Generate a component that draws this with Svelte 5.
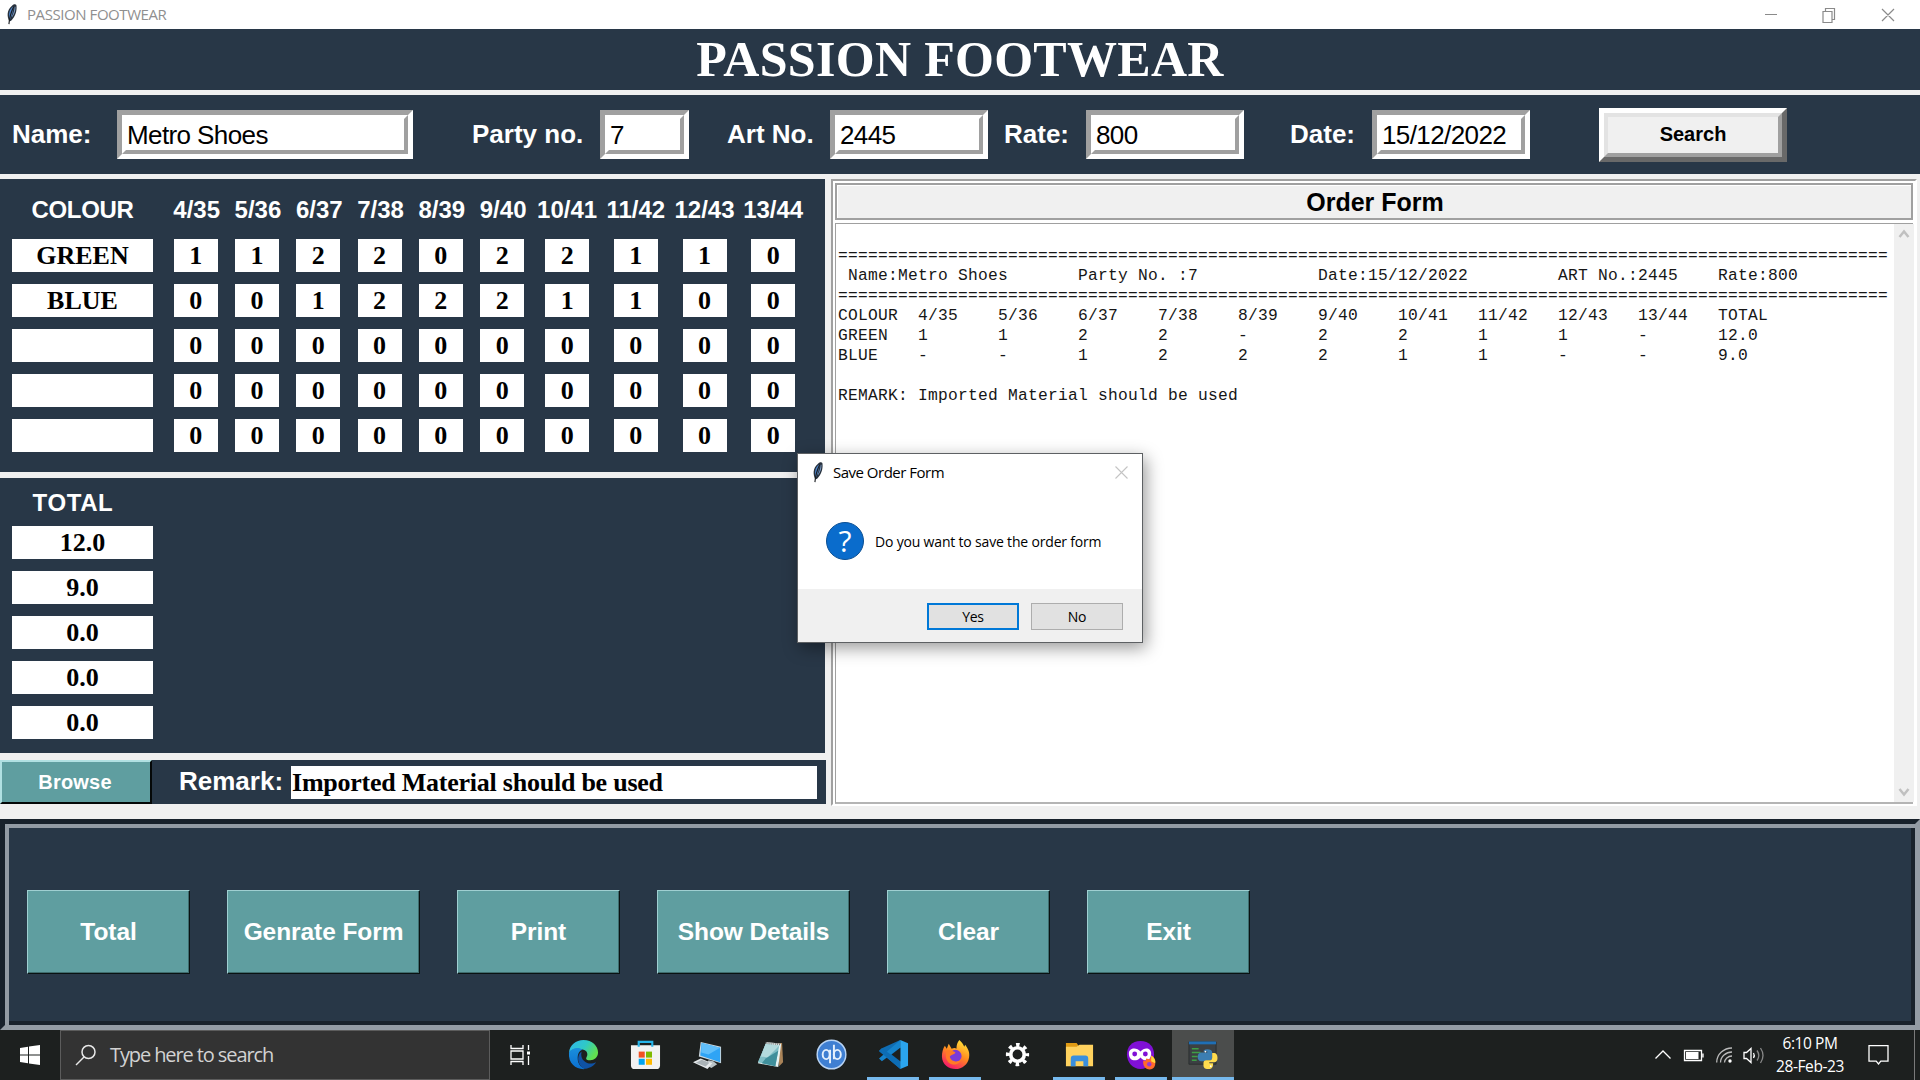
<script>
  const sizes = ['4/35', '5/36', '6/37', '7/38', '8/39', '9/40', '10/41', '11/42', '12/43', '13/44'];
  const rows = [
    { colour: 'GREEN', qty: [1, 1, 2, 2, 0, 2, 2, 1, 1, 0] },
    { colour: 'BLUE', qty: [0, 0, 1, 2, 2, 2, 1, 1, 0, 0] },
    { colour: '', qty: Array(10).fill(0) },
    { colour: '', qty: Array(10).fill(0) },
    { colour: '', qty: Array(10).fill(0) }
  ];
  const totals = ['12.0', '9.0', '0.0', '0.0', '0.0'];
  const fields = [
    { id: 'name', label: 'Name:', value: 'Metro Shoes' },
    { id: 'party', label: 'Party no.', value: '7' },
    { id: 'art', label: 'Art No.', value: '2445' },
    { id: 'rate', label: 'Rate:', value: '800' },
    { id: 'date', label: 'Date:', value: '15/12/2022' }
  ];
  const actions = ['Total', 'Genrate Form', 'Print', 'Show Details', 'Clear', 'Exit'];

  // Report text is laid out on 8-character tab stops.
  const tab = (cells) => cells.map((c) => String(c).padEnd(8)).join('').trimEnd();
  const rule = '='.repeat(105);
  const report = [
    '',
    rule,
    ' Name:Metro Shoes'.padEnd(24) + 'Party No. :7'.padEnd(24) + 'Date:15/12/2022'.padEnd(24) + 'ART No.:2445'.padEnd(16) + 'Rate:800',
    rule,
    tab(['COLOUR', ...sizes, 'TOTAL']),
    ...rows.slice(0, 2).map((r, i) => tab([r.colour, ...r.qty.map((q) => q || '-'), totals[i]])),
    '',
    tab(['REMARK:']) + ' Imported Material should be used'
  ];
</script>

{#snippet feather()}
  <svg class="feather" viewBox="0 0 14 24">
    <path d="M4 20C1 14 1 7 7 2c2-2 4-2 5-1 1 6-1 13-6 18z" fill="#26303c" />
    <path d="M4 16C3 11 4 6 8 3l1 0C8 8 7 13 5 17z" fill="#4e86cd" />
    <path d="M7 14c2-4 3-8 3-11l1 0c0 5-1 8-4 12z" fill="#7d9cc4" />
    <path d="M9 3C6 9 4 16 3.5 23" fill="none" stroke="#1b1e22" stroke-width="1.3" />
  </svg>
{/snippet}

<div class="screen">
  <header class="titlebar">
    {@render feather()}
    <span class="wintitle">PASSION FOOTWEAR</span>
    <svg class="winctl" viewBox="0 0 142 16" fill="none" stroke="#8a8a8a" stroke-width="1.2">
      <path d="M5 7.5h12M63 4.500h9v11h-9zM65.500 4.500v-3h9v11h-2.500M122 2l12 12M134 2l-12 12" />
    </svg>
  </header>

  <h1>PASSION FOOTWEAR</h1>

  <section class="fields">
    {#each fields as f}
      <label class="lab {f.id}" for={f.id}>{f.label}</label>
      <div class="entry {f.id}-entry" id={f.id}><span>{f.value}</span></div>
    {/each}
    <button class="search"><span>Search</span></button>
  </section>

  <main>
    <div class="left">
      <section class="colours">
        <div class="line head">
          <b class="first">COLOUR</b>
          {#each sizes as s, i}<b class:narrow={i < 6}>{s}</b>{/each}
        </div>
        {#each rows as r}
          <div class="line">
            <div class="first"><span class="cell">{r.colour}</span></div>
            {#each r.qty as q}<div><span class="cell">{q}</span></div>{/each}
          </div>
        {/each}
      </section>
      <section class="totals">
        <b>TOTAL</b>
        {#each totals as t}<span class="cell">{t}</span>{/each}
      </section>
      <section class="remark">
        <button class="browse">Browse</button>
        <b>Remark:</b>
        <span class="cell">Imported Material should be used</span>
      </section>
    </div>
    <section class="order">
      <h2>Order Form</h2>
      <div class="textarea">
        <div class="report">
          {#each report as l}<div class="rl">{l}</div>{/each}
        </div>
        <div class="scroll">
          <svg viewBox="0 0 12 10"><path d="M1.500 8L6 2.500 10.500 8" /></svg>
          <svg viewBox="0 0 12 10"><path d="M1.500 2L6 7.500 10.500 2" /></svg>
        </div>
      </div>
    </section>
  </main>

  <section class="actions">
    {#each actions as a}<button class:big={a.length > 8}>{a}</button>{/each}
  </section>

  <footer class="taskbar">
    <div class="start">
      <svg width="20" height="20" viewBox="0 0 20 20" fill="#fff"><path d="M0 3l8-1.200v7.700H0zM9 1.600L20 0v9.500H9zM0 10.500h8v7.700L0 17zM9 10.500h11V20L9 18.400z" /></svg>
    </div>
    <div class="find">
      <svg width="22" height="22" viewBox="0 0 22 22" fill="none" stroke="#e8e8e8" stroke-width="1.500"><circle cx="13.500" cy="8" r="6.500" /><path d="M9 13L1 21" /></svg>
      <span>Type here to search</span>
    </div>
    <div class="view">
      <svg width="21" height="20" viewBox="0 0 21 20" fill="none" stroke="#fff" stroke-width="1.300"><path d="M1 0v3.500h12V0M1 20v-3.500h12V20M1 6h12v8H1zM18.500 0v5M18.500 11v9" /><path d="M17 6.500h3v3h-3z" fill="#fff" stroke="none" /></svg>
    </div>
    <div class="task">
      <svg viewBox="0 0 32 32">
        <defs>
          <linearGradient id="eg" x1="0" y1="0" x2="1" y2=".5"><stop offset="0" stop-color="#2fb4ee" /><stop offset=".55" stop-color="#2fc9c7" /><stop offset="1" stop-color="#62e04f" /></linearGradient>
          <linearGradient id="eb" x1="0" y1="0" x2="0" y2="1"><stop offset="0" stop-color="#1a8fdd" /><stop offset="1" stop-color="#0b6fcf" /></linearGradient>
        </defs>
        <path d="M1 14C2 6 8 1 16 1c9 0 15 6 15 13 0 5-4 8-8 8-3 0-5-1-4-3 2-3 1-7-3-8C10 9 4 10 1 14z" fill="url(#eg)" />
        <path d="M1 14c3-5 10-6 14-3-4 1-5 5-5 9 0 5 3 9 8 11C9 32 0 26 1 14z" fill="url(#eb)" />
        <path d="M14 13c-3 2-5 8-2 13 2 4 6 6 9 4 4-1 7-4 8-6-4 2-9 2-12-1-3-2-4-6-3-10z" fill="#0f52a5" />
      </svg>
    </div>
    <div class="task">
      <svg viewBox="0 0 32 32"><path d="M1 6.500h30V27a4 4 0 0 1-4 4H5a4 4 0 0 1-4-4z" fill="#f2f2f2" /><path d="M9 8V3h14v5" fill="none" stroke="#27b5ea" stroke-width="2.200" /><path d="M9 13h6.200v6.200H9z" fill="#f25022" /><path d="M16.500 13h6.200v6.200h-6.200z" fill="#7fba00" /><path d="M9 20.400h6.200v6.200H9z" fill="#00a4ef" /><path d="M16.500 20.400h6.200v6.200h-6.200z" fill="#ffb900" /></svg>
    </div>
    <div class="task">
      <svg viewBox="0 0 32 32"><path d="M9 3l21 5v17L7 18z" fill="#c9d6dd" /><path d="M10 4l19 5v15L8.500 17z" fill="#2fa4f5" /><path d="M10 4l19 5-12 7-7.500-2z" fill="#61bffa" /><path d="M17 22l5 1 4 3-6 4-5-3z" fill="#b9c2c6" /><path d="M1 24l8-4 12 5-5 6z" fill="#e4e8ea" /><path d="M4 24.500l6-3 8 3-4 4z" fill="#aab3b7" /></svg>
    </div>
    <div class="task">
      <svg viewBox="0 0 32 32"><path d="M25 4h4l1 20-4 4z" fill="#a98358" /><path d="M13 3l15 2-3 24-21-4z" fill="#e7f3f2" /><path d="M12 5l14 2-4 21-18-4z" fill="#7fbec6" /><path d="M12 5l14 2-12 12-7-1z" fill="#b3dadd" /><path d="M12 20l13-8-3 16-14-3z" fill="#3f8f9b" /><path d="M12 4l15 1.500" stroke="#777" stroke-width="2" stroke-dasharray="1 1" /></svg>
    </div>
    <div class="task">
      <svg viewBox="0 0 32 32"><circle cx="16" cy="16" r="14.800" fill="#3f7fd2" stroke="#b9d4f4" stroke-width="1.500" /><g fill="none" stroke="#e5f0fc" stroke-width="2"><ellipse cx="10.500" cy="16" rx="3.600" ry="4.800" /><path d="M14.500 11v14M18.500 6v15" /><ellipse cx="22" cy="16" rx="3.600" ry="4.800" /></g></svg>
    </div>
    <div class="task run">
      <svg viewBox="0 0 32 32"><path d="M23 1v30L1 12.500 4 9.500z" fill="#0f6db3" /><path d="M23 1L1 20l3 3L23 9z" fill="#1583cc" /><path d="M23 31L1 12.500 4 9.500 23 23z" fill="#0d6db5" /><path d="M23 1l8 3.500v23L23 31z" fill="#2ba5ee" /><path d="M23 9v14l-9-7z" fill="#1d201f" /></svg>
    </div>
    <div class="task run">
      <svg viewBox="0 0 32 32">
        <defs><linearGradient id="ff" x1=".8" y1="0" x2=".3" y2="1"><stop offset="0" stop-color="#ffe83b" /><stop offset=".5" stop-color="#ff8a1f" /><stop offset="1" stop-color="#f5156c" /></linearGradient></defs>
        <path d="M20 1c2 2 4 4 5 7l1-2c3 4 5 8 4 13-1 7-7 12-14 12S2 26 2 18c0-4 1-8 3-11l2 3 2-5 3 5c2-1 4-1 5 0 0-4 1-7 3-9z" fill="url(#ff)" />
        <circle cx="16" cy="17.500" r="6.300" fill="#7a3bd8" /><path d="M7 12c3-1 6 0 9 2-1 2-4 2-6 4 1 5 8 7 12 3-1 5-8 7-12 4-4-3-5-8-3-13z" fill="#ff7a26" />
      </svg>
    </div>
    <div class="task">
      <svg viewBox="0 0 32 32" fill="none" stroke="#fff"><circle cx="16" cy="16" r="7" stroke-width="3.800" /><circle cx="16" cy="16" r="10" stroke-width="4" stroke-dasharray="3.600 4.254" stroke-dashoffset="1.800" /></svg>
    </div>
    <div class="task run">
      <svg viewBox="0 0 32 32"><path d="M2 4h11l2 3v6H2z" fill="#e09b14" /><path d="M2 8l11 0 3-2h14v22H2z" fill="#ffd25e" /><path d="M7 28V20q0-3 3-3h12q3 0 3 3v8h-5v-5h-8v5z" fill="#3a8fdd" /></svg>
    </div>
    <div class="task run">
      <svg viewBox="0 0 32 32"><path d="M16 2c9 0 14 6 14 14s-6 15-14 15S2 24 2 16 7 2 16 2z" fill="#8010d6" /><path d="M4 15c0-6 8-7 12-2 4-5 11-4 11 2 0 8-7 9-11 4-4 5-12 4-12-4z" fill="#fff" /><circle cx="10" cy="15.500" r="2.500" fill="#8010d6" /><circle cx="21" cy="15.500" r="2.500" fill="#8010d6" /><path d="M27 17c4 2 5 6 4 10s-5 5-8 4-5-5-4-9l2 1 1-3 3 1c1-1 2-2 2-4z" fill="#ff6a2b" /><path d="M27 17c3 2 5 5 4 8l-4-2z" fill="#ffd83a" /><circle cx="25" cy="26" r="2.300" fill="#9a3bd0" /></svg>
    </div>
    <div class="task run active">
      <svg viewBox="0 0 32 32"><path d="M2 3h28v23H2z" fill="#3c4043" stroke="#2b2e30" /><path d="M2 2.500h28v3H2z" fill="#1f6fb5" /><path d="M5 10h7M5 14h9M5 18h6M5 22h5" stroke="#3e9e46" stroke-width="1.500" /><path d="M18 21h-3.500c-2 0-3.500-2-3.500-4.500 0-3 2-4.500 4-4.500h6v-1h-4c0-1.500 1-2.500 4-2.500s5 1 5 3.500v5c0 2-1 3-3 3h-2c-2 0-3 1-3 3z" transform="translate(0 2)" fill="#3c7eb2" /><path d="M26 14.500h2c2 0 3.500 2 3.500 5s-1.500 4.500-3.500 4.500h-5v1h4c0 4-1 6-5 6s-5-2-5-4v-2c0-2 1-3 3-3h3c2 0 3-1 3-3z" fill="#ffdc4e" /><circle cx="19" cy="13" r=".9" fill="#fff" /><circle cx="24.500" cy="28" r=".9" fill="#fff" /></svg>
    </div>
    <div class="tray">
      <svg width="110" height="22" viewBox="0 0 110 22" fill="none" stroke="#fff" stroke-width="1.300">
        <path d="M1.500 14.500L9 7l7.500 7.500" />
        <path d="M30.500 6.500h17v10h-17zM49 9.500v4" /><path d="M32 8h12.500v7H32z" fill="#fff" stroke="none" />
        <path d="M62.700 18.500C62.700 10 70 4 78 4M66.500 18.500C66.500 12.500 72 8 78 8M70.500 18.500C70.500 15 74 12 78 12" stroke="#bbb" /><circle cx="76" cy="17" r="1.700" fill="#fff" stroke="none" />
        <path d="M90 8.500h2.500l4.500-4v14l-4.500-4H90z" /><path d="M99.500 9q1.600 2.500 0 5" /><path d="M103 6.500q3.600 5 0 10M106.500 4q5 7.500 0 15" stroke="#888" />
      </svg>
    </div>
    <div class="clock"><span>6:10 PM</span><span>28-Feb-23</span></div>
    <svg class="notif" width="21" height="20" viewBox="0 0 21 20" fill="none" stroke="#fff" stroke-width="1.300"><path d="M1 .7h19v15.500h-7.200L10.500 19l-2.300-2.800H1z" /></svg>
    <i class="peek"></i>
  </footer>

  <div class="dialog">
    <div class="dtitle">
      {@render feather()}
      <span>Save Order Form</span>
      <svg width="13" height="13" viewBox="0 0 13 13" stroke="#c4c4c4" stroke-width="1.100"><path d="M.5.5l12 12M12.500.5l-12 12" /></svg>
    </div>
    <div class="dbody">
      <div class="q">?</div>
      <span>Do you want to save the order form</span>
    </div>
    <div class="dfoot">
      <button class="yes">Yes</button>
      <button>No</button>
    </div>
  </div>
</div>

<style>
  :global(body) { margin: 0; overflow: hidden; }
  .screen { position: relative; width: 1920px; height: 1080px; display: flex; flex-direction: column; background: #f0f0f0; font-family: 'Liberation Sans', Arial, sans-serif; overflow: hidden; }
  .screen * { box-sizing: border-box; }
  button { font: inherit; margin: 0; padding: 0; border-radius: 0; }

  .titlebar { height: 29px; flex: none; background: #fff; display: flex; align-items: center; padding-left: 5px; }
  .feather { width: 14px; height: 21px; flex: none; }
  .wintitle { font: 15px/29px 'Open Sans', sans-serif; color: #8f8f8f; margin-left: 8px; flex: 1; letter-spacing: -0.430px; }
  .winctl { width: 142px; height: 16px; margin-right: 18px; }

  h1 { margin: 0 0 5px; height: 61px; flex: none; background: #283747; color: #fff; text-align: center; font: bold 50px/60px 'Liberation Serif', serif; letter-spacing: .3px; }

  .fields { height: 79px; flex: none; margin-bottom: 5px; background: #283747; display: grid; align-items: center; justify-items: start; grid-template-columns: 105px 355px 128px 127px 103px 174px 82px 204px 82px 227px 188px; padding-left: 12px; }
  .lab { color: #fff; font-weight: bold; font-size: 26px; white-space: nowrap; }
  .entry { height: 49px; width: 158px; border: 5px solid; border-color: #a0a0a0 #fff #fff #a0a0a0; }
  .entry span { display: block; height: 39px; background: #fff; border: 4px solid; border-color: #fff #a0a0a0 #a0a0a0 #fff; padding-left: 1px; font-size: 26px; line-height: 33px; color: #000; letter-spacing: -0.6px; }
  .name-entry { width: 296px; }
  .party-entry { width: 89px; }
  .search { width: 188px; height: 54px; border: 5px solid; border-color: #fff #696969 #696969 #fff; background: #f0f0f0; font-weight: bold; font-size: 20px; color: #000; }
  .search span { display: block; height: 44px; border: 4px solid; border-color: #e3e3e3 #a0a0a0 #a0a0a0 #e3e3e3; line-height: 35px; }

  main { height: 640px; flex: none; display: flex; gap: 5px; }
  .left { width: 826px; display: flex; flex-direction: column; }
  .cell { display: block; height: 33px; background: #fff; color: #000; text-align: center; font: bold 26px/33px 'Liberation Serif', serif; width: 44px; margin: 0 auto; }
  .colours { width: 825px; height: 293px; background: #283747; display: flex; flex-direction: column; gap: 12px; padding-top: 14px; }
  .line { display: grid; grid-template-columns: 165px repeat(6, 61.3px) repeat(4, 68.7px); }
  .head { height: 34px; align-items: center; color: #fff; font-size: 24px; text-align: center; }
  .head .first { letter-spacing: -.3px; }
  .head .narrow { padding-left: 2px; }
  .line .first .cell { width: 141px; }
  .totals { width: 825px; height: 275px; margin-top: 6px; background: #283747; display: flex; flex-direction: column; gap: 12px; padding: 8px 12px 0; }
  .totals b { color: #fff; font-size: 24px; line-height: 33px; height: 28px; width: 122px; text-align: center; letter-spacing: .6px; }
  .totals .cell { width: 141px; margin: 0; flex: none; }
  .remark { width: 826px; height: 44px; margin-top: 7px; background: #283747; display: flex; align-items: center; }
  .browse { width: 152px; height: 44px; background: #5f9ea0; color: #fff; font-weight: bold; font-size: 20px; border: 2.500px solid; border-color: #b0e0e2 #050808 #050808 #b0e0e2; letter-spacing: .2px; padding-right: 2px; }
  .remark b { color: #fff; font-size: 26px; width: 139px; padding-left: 27px; line-height: 42px; height: 44px; }
  .remark .cell { width: 526px; margin: 0; text-align: left; padding-left: 1px; letter-spacing: -.24px; }

  .order { width: 1086px; height: 627px; border: 2px solid; border-color: #a0a0a0 #fff #fff #a0a0a0; padding: 2px 2px 0; background: #fff; display: flex; flex-direction: column; gap: 3px; }
  .order h2 { margin: 0; height: 37px; background: #f0f0f0; border: 2px solid #a0a0a0; box-shadow: inset 1px 1px 0 #fff; text-align: center; font-weight: bold; font-size: 25px; line-height: 34px; padding-left: 2px; flex: none; }
  .textarea { flex: 1; border: 1px solid #a0a0a0; border-width: 1.500px 0 0 1.500px; border-bottom: 2px solid #b4b4b4; display: flex; justify-content: space-between; background: #fff; }
  .report { padding: 2px 0 0 2px; white-space: pre; font: 16.250px/20px 'Liberation Mono', monospace; letter-spacing: .248px; color: #161616; }
  .rl { height: 20px; }
  .scroll { width: 20px; margin-right: -1px; background: #f0f0f0; display: flex; flex-direction: column; justify-content: space-between; align-items: center; padding: 5px 0; }
  .scroll svg { width: 12px; height: 10px; fill: none; stroke: #c0c0c0; stroke-width: 2.500; }

  .actions { height: 211px; flex: none; background: #283747; border: 5px solid; border-color: #18212b #939ba4 #939ba4 #18212b; box-shadow: inset 4px 4px 0 #939ba4, inset -4px -4px 0 #18212b; padding: 66px 0 0 22px; display: flex; gap: 37px; }
  .actions button { width: 163px; height: 84px; background: #5f9ea0; color: #fff; font-weight: bold; font-size: 24.500px; border: 1.500px solid; border-color: #9fcfd1 #0a1212 #0a1212 #9fcfd1; box-shadow: inset -1px -1px 0 #3f6c6e; white-space: nowrap; padding-bottom: 1px; letter-spacing: -.08px; }
  .actions button.big { width: 193px; }

  .taskbar { height: 50px; flex: none; background: #1d201f; display: flex; font-family: 'Open Sans', sans-serif; color: #fff; }
  .start { width: 60px; display: grid; place-items: center; }
  .find { width: 430px; background: #333; border: 1px solid #5c5c5c; display: flex; align-items: center; padding: 0 0 1px 14px; gap: 13px; color: #d2d2d2; font-size: 20px; letter-spacing: -1.100px; white-space: nowrap; }
  .view { width: 60px; display: grid; place-items: center; }
  .task { width: 61.900px; height: 50px; display: grid; place-items: center; border: solid transparent; border-width: 0 5px; padding-bottom: 1px; }
  .task svg { width: 31px; height: 31px; }
  .view + .task { margin-left: 3px; }
  .run { background: linear-gradient(#76b9ed, #76b9ed) bottom / 52px 3px no-repeat padding-box; }
  .active { background: linear-gradient(#76b9ed, #76b9ed) bottom / 62px 3px no-repeat border-box, #4b4d4c; }
  .tray { margin-left: auto; width: 110px; display: flex; align-items: center; }
  .clock { width: 88px; display: flex; flex-direction: column; align-items: center; margin-left: 2px; padding-top: 2px; font-size: 15.500px; line-height: 23px; letter-spacing: -.4px; white-space: nowrap; }
  .notif { margin: 15px 25px 0 14px; }
  .peek { width: 1px; height: 50px; background: #7a7a7a; margin-right: 5px; }

  .dialog { position: absolute; left: 797px; top: 453px; width: 346px; height: 190px; border: 1px solid #5d6063; background: #fff; box-shadow: 3px 5px 16px rgba(0, 0, 0, .4); font-family: 'Open Sans', sans-serif; color: #000; display: flex; flex-direction: column; }
  .dtitle { height: 36px; display: flex; align-items: center; padding: 0 14px 0 13px; font-size: 15px; }
  .dtitle span { flex: 1; margin-left: 8px; letter-spacing: -.5px; }
  .dbody { flex: 1; display: flex; align-items: center; padding: 2px 0 0 28px; gap: 11px; font-size: 14px; font-weight: 500; white-space: nowrap; letter-spacing: -.18px; }
  .q { width: 38px; height: 38px; border-radius: 50%; background: #0a6ccc; border: 1.500px solid #0a4f94; color: #fff; font-size: 30px; font-weight: 400; line-height: 35px; text-align: center; }
  .dbody span { padding-top: 1px; }
  .dfoot { height: 53px; background: #f0f0f0; display: flex; gap: 12px; justify-content: flex-end; padding: 14px 19px 0 0; }
  .dfoot button { width: 92px; height: 27px; background: #e1e1e1; border: 1px solid #adadad; font-size: 14px; font-weight: 500; line-height: 24px; color: #000; letter-spacing: -.3px; }
  .dfoot .yes { border: 2px solid #0078d7; line-height: 22px; }
</style>
